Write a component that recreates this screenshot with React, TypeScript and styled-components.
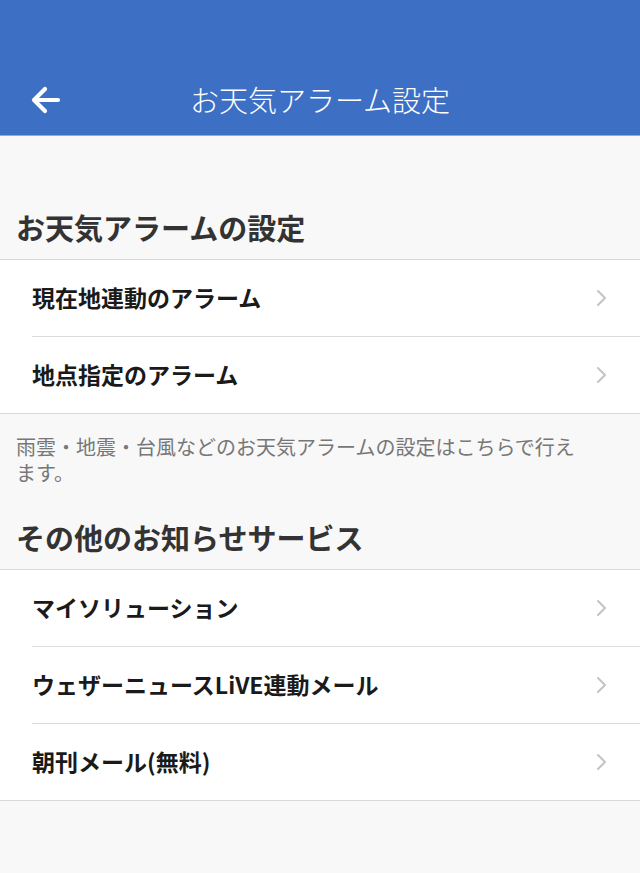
import React from 'react';
import styled, { createGlobalStyle } from 'styled-components';

const GlobalStyle = createGlobalStyle`
  html, body {
    margin: 0;
    padding: 0;
    background: #f8f8f8;
    font-family: "Noto Sans CJK JP", "Noto Sans", sans-serif;
  }
`;

const Page = styled.div`
  width: 640px;
  min-height: 873px;
  background: #f8f8f8;
`;

const Header = styled.header`
  height: 136px;
  background: #3d6fc4;
  box-sizing: border-box;
  padding-top: 64px;
  border-bottom: 1px solid #9aa9c4;
`;

const NavBar = styled.div`
  height: 71px;
  display: grid;
  grid-template-columns: 96px 1fr 96px;
  align-items: center;
`;

const BackButton = styled.button`
  border: none;
  background: none;
  padding: 0 0 0 30px;
  height: 100%;
  display: flex;
  align-items: center;
  cursor: pointer;
`;

const Title = styled.h1`
  margin: 0;
  text-align: center;
  color: #ffffff;
  font-size: 29px;
  font-weight: 300;
  line-height: 1;
`;

const SectionTitle = styled.h2<{ $top: number }>`
  margin: 0;
  padding: ${p => p.$top}px 16px 14px;
  font-size: 29px;
  line-height: 36px;
  font-weight: 700;
  color: #333333;
`;

const List = styled.ul`
  margin: 0;
  padding: 0;
  list-style: none;
  background: #ffffff;
  border-top: 1px solid #d9d9d9;
  border-bottom: 1px solid #d9d9d9;
`;

const Item = styled.li`
  padding-left: 32px;
  & + & > div {
    border-top: 1px solid #dcdcdc;
  }
`;

const ItemInner = styled.div`
  height: 76px;
  display: flex;
  align-items: center;
  justify-content: space-between;
  padding-right: 32px;
`;

const ItemLabel = styled.span`
  font-size: 23px;
  line-height: 30px;
  font-weight: 700;
  color: #1a1a1a;
  margin-top: -3px;
`;

const Note = styled.p`
  margin: 0;
  padding: 20px 50px 0 16px;
  font-size: 20px;
  line-height: 26px;
  color: #777777;
`;

const BackArrow = () => (
  <svg width="32" height="30" viewBox="0 0 32 30" fill="none">
    <path
      d="M28 15H5M15 4L4 15l11 11"
      stroke="#ffffff"
      strokeWidth="4.2"
      strokeLinecap="round"
      strokeLinejoin="round"
    />
  </svg>
);

const Chevron = () => (
  <svg width="12" height="18" viewBox="0 0 12 18" fill="none">
    <path d="M2 2l7 7-7 7" stroke="#c4c4c4" strokeWidth="2" strokeLinecap="round" strokeLinejoin="round" />
  </svg>
);

const alarms = ['現在地連動のアラーム', '地点指定のアラーム'];
const services = ['マイソリューション', 'ウェザーニュースLiVE連動メール', '朝刊メール(無料)'];

const MenuList = ({ items }: { items: string[] }) => (
  <List>
    {items.map(label => (
      <Item key={label}>
        <ItemInner>
          <ItemLabel>{label}</ItemLabel>
          <Chevron />
        </ItemInner>
      </Item>
    ))}
  </List>
);

export default function App() {
  return (
    <Page>
      <GlobalStyle />
      <Header>
        <NavBar>
          <BackButton aria-label="戻る">
            <BackArrow />
          </BackButton>
          <Title>お天気アラーム設定</Title>
          <div />
        </NavBar>
      </Header>

      <SectionTitle $top={73}>お天気アラームの設定</SectionTitle>
      <MenuList items={alarms} />
      <Note>雨雲・地震・台風などのお天気アラームの設定はこちらで行えます。</Note>

      <SectionTitle $top={33}>その他のお知らせサービス</SectionTitle>
      <MenuList items={services} />
    </Page>
  );
}
